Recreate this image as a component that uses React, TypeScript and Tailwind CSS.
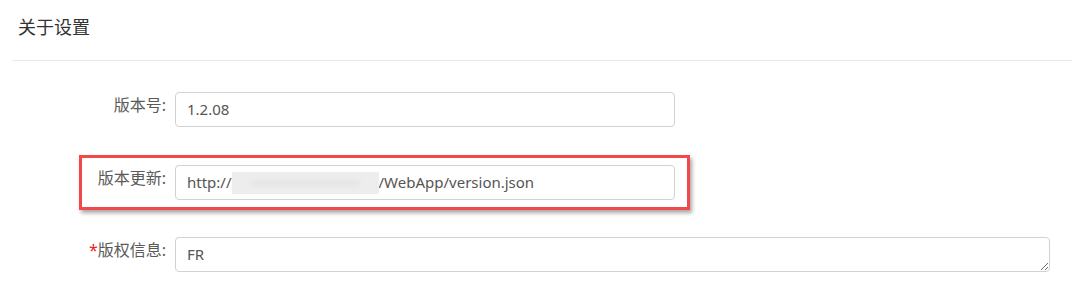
import React from "react";

const font = { fontFamily: '"Noto Sans", "Noto Sans CJK SC", sans-serif' };

function Label({ children, star }: { children: React.ReactNode; star?: boolean }) {
  return (
    <div className="w-[175px] shrink-0 pr-[9px] pt-[3px] text-right text-[16px] leading-[20px] text-[#5a5a5a]">
      {star && <span className="text-[#e22]">*</span>}
      {children}
    </div>
  );
}

export default function App() {
  return (
    <div className="w-[1073px] h-[288px] overflow-hidden bg-white" style={font}>
      <div className="h-[60px] pl-[18px] pt-[14px] text-[18px] leading-[26px] text-[#333]">关于设置</div>
      <div className="ml-[12px] mr-[1px] h-px bg-[#e8e8e8]" />

      <div className="mt-[31px] flex items-start">
        <Label>版本号:</Label>
        <div className="flex h-[35px] w-[500px] items-center rounded-[4px] border border-[#d2d2d2] px-[11px] text-[15px] text-[#555]">
          1.2.08
        </div>
      </div>

      <div className="relative mt-[38px] flex items-start">
        <Label>版本更新:</Label>
        <div className="flex h-[35px] w-[500px] items-center rounded-[4px] border border-[#d2d2d2] px-[11px] text-[15px] text-[#555]">
          <span>http://</span>
          <span className="relative h-[22px] w-[147px] bg-[#ededed]">
            <span className="absolute left-[20px] right-[20px] top-[9px] h-[4px] bg-[#e2e2e2] blur-[2px]" />
          </span>
          <span>/WebApp/version.json</span>
        </div>
        <div className="pointer-events-none absolute left-[79px] top-[-10px] h-[55px] w-[611px] border-[3px] border-[#f44848] shadow-[2px_3px_4px_rgba(0,0,0,0.35)]" />
      </div>

      <div className="mt-[37px] flex items-start">
        <Label star>版权信息:</Label>
        <textarea
          defaultValue="FR"
          className="h-[35px] w-[875px] rounded-[4px] border border-[#d2d2d2] px-[11px] py-[5px] text-[15px] leading-[22px] text-[#555] outline-none"
          style={font}
        />
      </div>
    </div>
  );
}
